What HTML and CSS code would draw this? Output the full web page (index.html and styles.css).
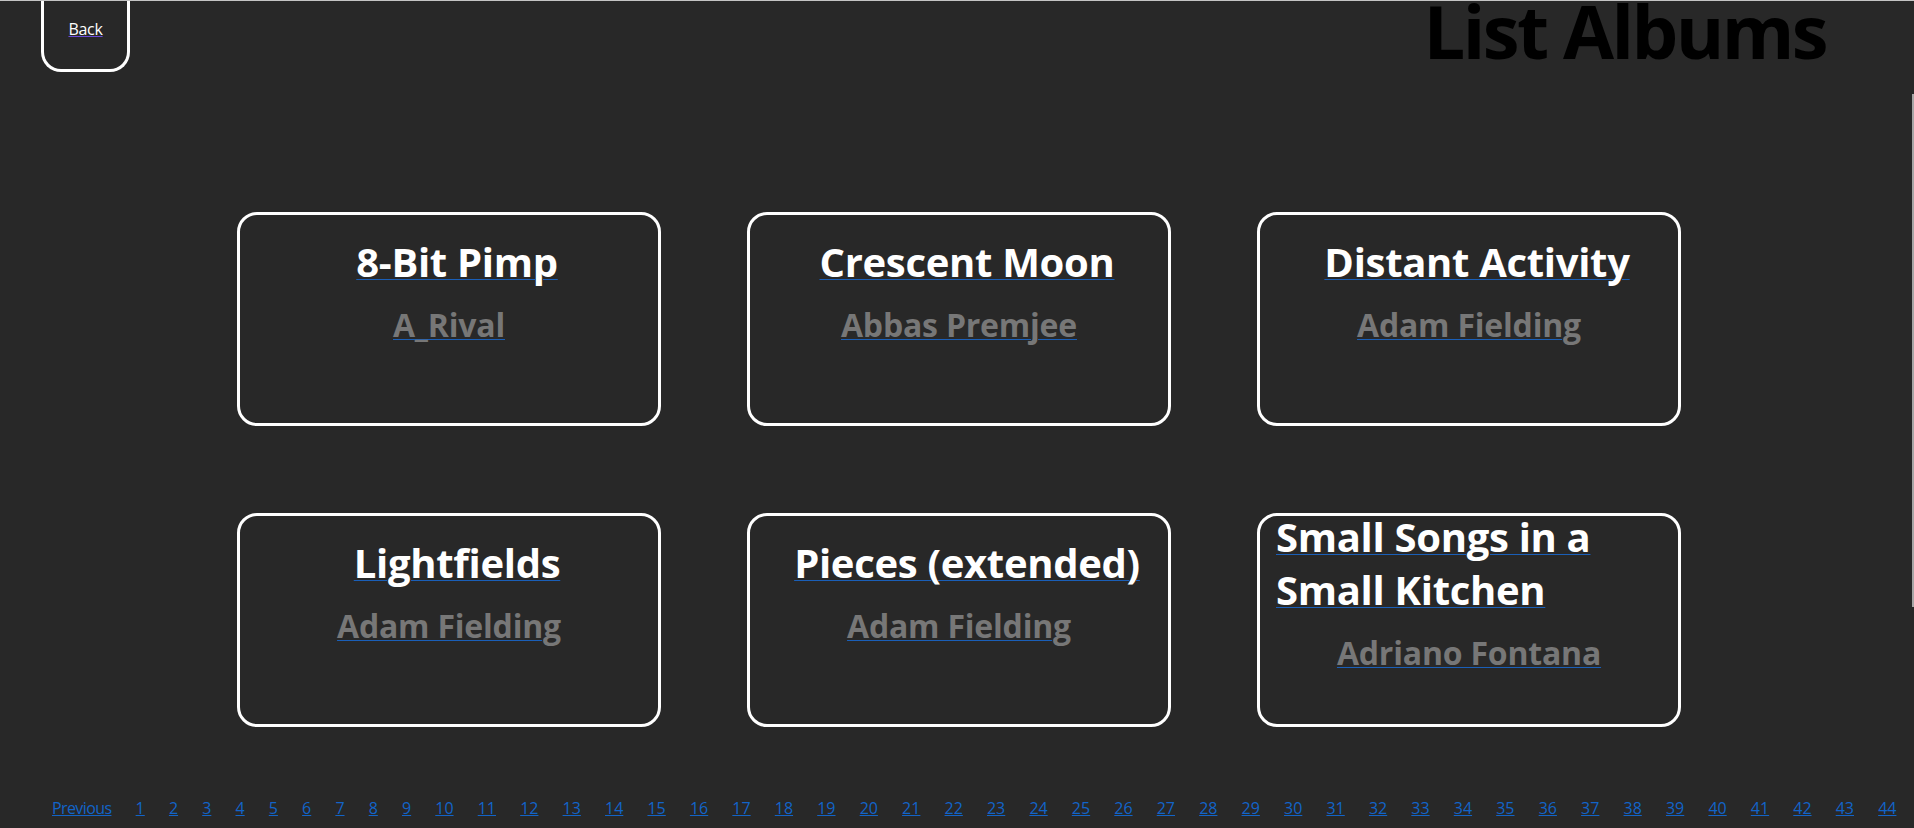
FILE: index.html
```html
<!DOCTYPE html>
<html lang="en">
<head>
<meta charset="utf-8">
<title>List Albums</title>
<link rel="stylesheet" href="styles.css">
</head>
<body>
<header class="header">
  <div class="back"><a class="back-link" href="#">Back</a></div>
  <h1 class="page-title">List Albums</h1>
</header>
<main class="grid">
  <div class="card"><a class="card-title" href="#">8-Bit Pimp</a><a class="card-artist" href="#">A_Rival</a></div>
  <div class="card"><a class="card-title" href="#">Crescent Moon</a><a class="card-artist" href="#">Abbas Premjee</a></div>
  <div class="card"><a class="card-title" href="#">Distant Activity</a><a class="card-artist" href="#">Adam Fielding</a></div>
  <div class="card"><a class="card-title" href="#">Lightfields</a><a class="card-artist" href="#">Adam Fielding</a></div>
  <div class="card"><a class="card-title" href="#">Pieces (extended)</a><a class="card-artist" href="#">Adam Fielding</a></div>
  <div class="card"><a class="card-title" href="#">Small Songs in a Small Kitchen</a><a class="card-artist" href="#">Adriano Fontana</a></div>
</main>
<nav class="pager">
  <a class="pager-prev" href="#">Previous</a>
  <a href="#">1</a><a href="#">2</a><a href="#">3</a><a href="#">4</a><a href="#">5</a><a href="#">6</a><a href="#">7</a><a href="#">8</a><a href="#">9</a><a href="#">10</a>
  <a href="#">11</a><a href="#">12</a><a href="#">13</a><a href="#">14</a><a href="#">15</a><a href="#">16</a><a href="#">17</a><a href="#">18</a><a href="#">19</a><a href="#">20</a>
  <a href="#">21</a><a href="#">22</a><a href="#">23</a><a href="#">24</a><a href="#">25</a><a href="#">26</a><a href="#">27</a><a href="#">28</a><a href="#">29</a><a href="#">30</a>
  <a href="#">31</a><a href="#">32</a><a href="#">33</a><a href="#">34</a><a href="#">35</a><a href="#">36</a><a href="#">37</a><a href="#">38</a><a href="#">39</a><a href="#">40</a>
  <a href="#">41</a><a href="#">42</a><a href="#">43</a><a href="#">44</a>
</nav>
<div class="scroll-thumb"></div>
</body>
</html>
```
FILE: styles.css
```css
html, body {
  margin: 0;
  padding: 0;
}
body {
  background: #282828;
  border-top: 1px solid #c4c4c4;
  font-family: "Open Sans", "Noto Sans", sans-serif;
  overflow: hidden;
  height: 827px;
}
.header {
  display: flex;
  justify-content: space-between;
  align-items: flex-start;
  height: 71px;
  padding: 0 88px 0 41px;
}
.back {
  box-sizing: border-box;
  width: 89px;
  height: 71px;
  border: 3px solid #ffffff;
  border-top: none;
  border-radius: 0 0 20px 20px;
  display: flex;
  justify-content: center;
  padding-top: 18px;
}
.back-link {
  color: #ffffff;
  font-size: 16px;
  line-height: 21px;
  letter-spacing: -0.3px;
  text-decoration-color: #6a4bd8;
  text-decoration-thickness: 1px;
}
.page-title {
  margin: 0;
  font-size: 74px;
  line-height: 60px;
  letter-spacing: -2.6px;
  font-weight: 700;
  color: #000000;
}
.grid {
  display: grid;
  grid-template-columns: repeat(3, 424px);
  column-gap: 86px;
  row-gap: 87px;
  padding-left: 237px;
  margin-top: 140px;
}
.card {
  box-sizing: border-box;
  height: 214px;
  border: 3px solid #ffffff;
  border-radius: 20px;
  display: flex;
  flex-direction: column;
  justify-content: center;
  align-items: center;
}
.card-title {
  margin-left: 16px;
  color: #ffffff;
  font-size: 40px;
  line-height: 53px;
  font-weight: 700;
  letter-spacing: -0.3px;
  text-decoration-color: #1a5fb8;
  text-decoration-thickness: 1px;
  text-underline-offset: 2px;
}
.card-artist {
  margin: 15px 0 57px;
  color: #777777;
  font-size: 32px;
  line-height: 43px;
  font-weight: 700;
  letter-spacing: -0.2px;
  text-decoration-color: #1a5fb8;
  text-decoration-thickness: 1px;
  text-underline-offset: 2px;
}
.pager {
  display: flex;
  gap: 24.15px;
  margin-top: 71px;
  padding-left: 52px;
  white-space: nowrap;
  font-size: 16px;
  line-height: 21px;
}
.pager a {
  color: #1264c8;
  text-decoration-thickness: 1px;
}
.pager .pager-prev {
  letter-spacing: -0.6px;
}
.scroll-thumb {
  position: fixed;
  top: 94px;
  right: 0;
  width: 2px;
  height: 513px;
  background: #a6a6a6;
}
```
